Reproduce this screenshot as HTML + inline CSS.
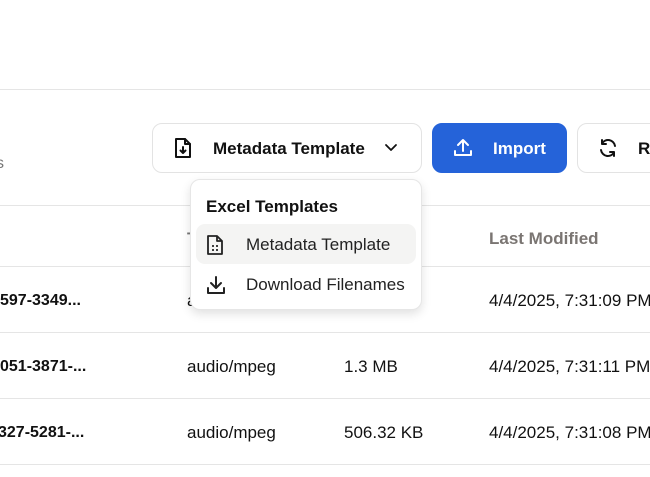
<!DOCTYPE html>
<html><head><style>
*{margin:0;padding:0;box-sizing:border-box}
body{width:650px;height:477px;overflow:hidden;background:#fff;font-family:"Liberation Sans",sans-serif;color:#111;position:relative;font-size:17px}
.a{position:absolute;white-space:nowrap}
.hl{position:absolute;left:0;width:650px;height:1px;background:#e5e5e5}
.btn{position:absolute;top:123px;height:50px;border:1px solid #e3e3e3;border-radius:10px;background:#fff}
.b{font-weight:bold}
</style></head><body>
<div class="hl" style="top:89px"></div>
<div class="a" style="left:-4px;top:155px;color:#777;font-size:16px">s</div>
<div class="btn" style="left:152px;width:270px"></div>
<svg class="a" style="left:173px;top:137px" width="20" height="22" viewBox="0 0 20 22" fill="none" stroke="#111" stroke-width="2" stroke-linejoin="round" stroke-linecap="round"><path d="M3 2h9l5 5v13H3z"/><path d="M12 2v5h5"/><path d="M10 10v6M7.5 13.5 10 16l2.5-2.5"/></svg>
<div class="a b" style="left:213px;top:139px;font-size:17px">Metadata Template</div>
<svg class="a" style="left:383px;top:142px" width="16" height="12" viewBox="0 0 16 12" fill="none" stroke="#111" stroke-width="1.8" stroke-linecap="round" stroke-linejoin="round"><path d="M3 3l5 5 5-5"/></svg>
<div class="btn" style="left:432px;width:135px;background:#2563d9;border-color:#2563d9"></div>
<svg class="a" style="left:452px;top:137px" width="22" height="22" viewBox="0 0 22 22" fill="none" stroke="#fff" stroke-width="2" stroke-linecap="round" stroke-linejoin="round"><path d="M11 3v11M6 8l5-5 5 5M3 14v4h16v-4"/></svg>
<div class="a b" style="left:493px;top:139px;font-size:17px;color:#fff">Import</div>
<div class="btn" style="left:577px;width:100px"></div>
<svg class="a" style="left:597px;top:137px" width="22" height="22" viewBox="0 0 22 22" fill="none" stroke="#111" stroke-width="2" stroke-linecap="round" stroke-linejoin="round"><path d="M18 9A7 7 0 0 0 5 6.5M4 13a7 7 0 0 0 13 2.5"/><path d="M5 3v4h4M17 19v-4h-4"/></svg>
<div class="a b" style="left:638px;top:139px;font-size:17px">Re</div>
<div class="hl" style="top:205px"></div>
<div class="a" style="left:187px;top:229px;color:#777;font-weight:bold">T</div>
<div class="a b" style="left:489px;top:229px;color:#7a7572">Last Modified</div>
<div class="hl" style="top:266px"></div>
<div class="a b" style="left:0;top:292px;font-size:16px">597-3349...</div>
<div class="a" style="left:187px;top:291px">audio/mpeg</div>
<div class="a" style="left:489px;top:291px">4/4/2025, 7:31:09 PM</div>
<div class="hl" style="top:332px"></div>
<div class="a b" style="left:0;top:358px;font-size:16px">051-3871-...</div>
<div class="a" style="left:187px;top:357px">audio/mpeg</div>
<div class="a" style="left:344px;top:357px">1.3 MB</div>
<div class="a" style="left:489px;top:357px">4/4/2025, 7:31:11 PM</div>
<div class="hl" style="top:398px"></div>
<div class="a b" style="left:-2px;top:424px;font-size:16px">327-5281-...</div>
<div class="a" style="left:187px;top:423px">audio/mpeg</div>
<div class="a" style="left:344px;top:423px">506.32 KB</div>
<div class="a" style="left:489px;top:423px">4/4/2025, 7:31:08 PM</div>
<div class="hl" style="top:464px"></div>
<div class="a" style="left:190px;top:179px;width:232px;height:131px;background:#fff;border:1px solid #e6e6e6;border-radius:10px;box-shadow:0 4px 10px rgba(0,0,0,.12)"></div>
<div class="a b" style="left:206px;top:197px">Excel Templates</div>
<div class="a" style="left:196px;top:224px;width:220px;height:40px;background:#f4f4f3;border-radius:9px"></div>
<svg class="a" style="left:205px;top:234px" width="20" height="22" viewBox="0 0 20 22" fill="none" stroke="#222" stroke-width="1.8" stroke-linejoin="round"><path d="M3 2h9l5 5v13H3z"/><path d="M12 2v5h5"/><path d="M7 12h2M11 12h2M7 16h2M11 16h2"/></svg>
<div class="a" style="left:246px;top:235px;color:#222">Metadata Template</div>
<svg class="a" style="left:205px;top:274px" width="22" height="22" viewBox="0 0 22 22" fill="none" stroke="#222" stroke-width="2" stroke-linecap="round" stroke-linejoin="round"><path d="M11 3v10M6 9l5 5 5-5M3 14v5h16v-5"/></svg>
<div class="a" style="left:246px;top:275px;color:#222">Download Filenames</div>
</body></html>
